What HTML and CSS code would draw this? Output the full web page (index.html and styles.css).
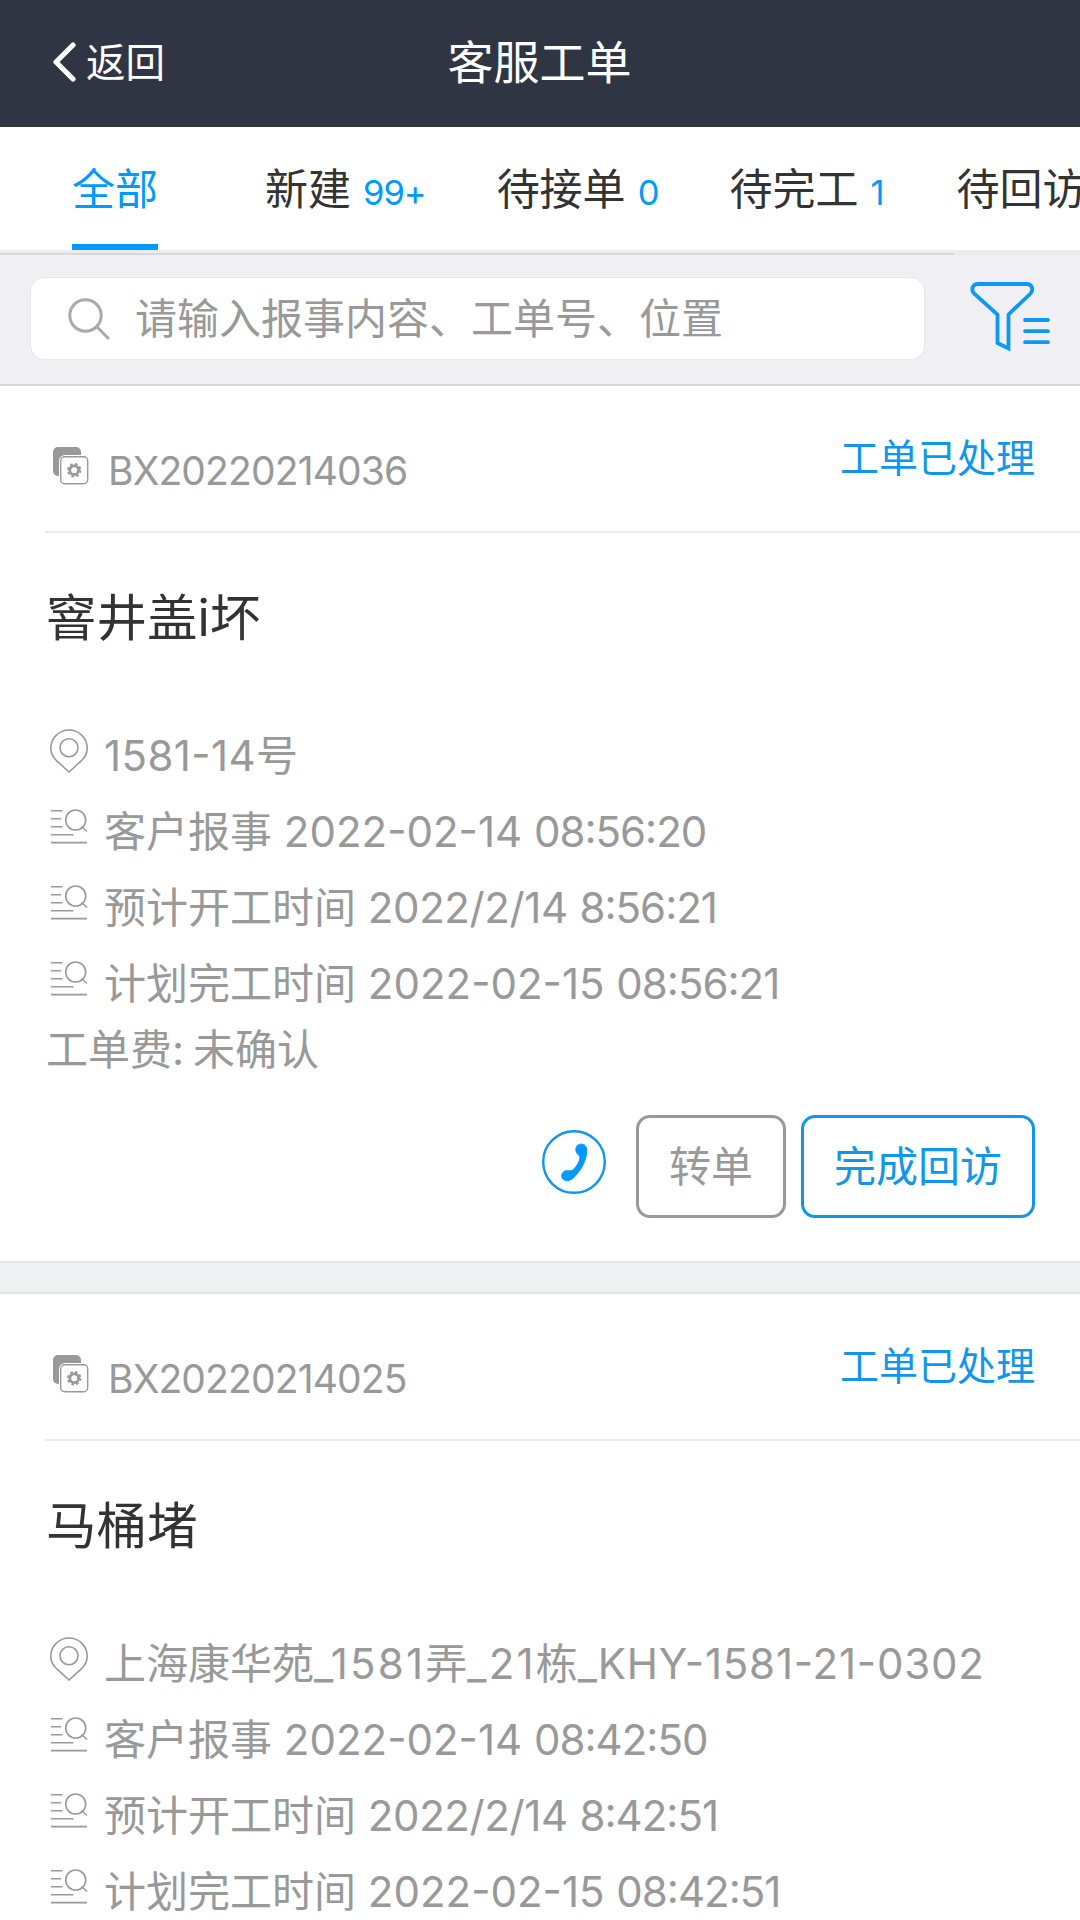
FILE: index.html
```html
<!DOCTYPE html>
<html lang="zh-CN">
  <head>
    <meta charset="UTF-8" />
    <meta name="viewport" content="width=device-width, initial-scale=1.0" />
    <title>客服工单</title>
    <link rel="stylesheet" href="styles.css">
  </head>
  <body>
    <!-- shared icons -->
    <svg class="sprite">
      <symbol id="icon-order" viewBox="0 0 36 38">
        <path d="M5 0h18a5 5 0 0 1 5 5v3H12a6 6 0 0 0-6 6v15H5a5 5 0 0 1-5-5V5a5 5 0 0 1 5-5z" fill="#999" />
        <rect x="7.7" y="9.7" width="27" height="27" rx="4" fill="#fff" stroke="#999" stroke-width="1.4" />
        <circle cx="21.2" cy="23.2" r="4.4" fill="none" stroke="#999" stroke-width="2.8" />
        <circle cx="21.2" cy="23.2" r="6.2" fill="none" stroke="#999" stroke-width="2" stroke-dasharray="2.6 2.27" />
      </symbol>
      <symbol id="icon-pin" viewBox="0 0 38 44">
        <path d="M19 43L6.2 31.3C3 28.2.8 23.8.8 19.2a18.2 18.2 0 0 1 36.4 0c0 4.6-2.2 9-5.4 12.1z" />
        <circle cx="19" cy="18.7" r="9" />
      </symbol>
      <symbol id="icon-record" viewBox="0 0 38 36">
        <path d="M1 1.7h11.5M1 9.7h10M1 17.7h11.5M1 25.7h22.5M1 33.6h36M31.5 17.5l5.5 5" />
        <circle cx="25.7" cy="11" r="10" />
      </symbol>
    </svg>

    <header class="navbar">
      <a class="back">
        <svg class="back-icon" viewBox="0 0 23 40">
          <path d="M20.5 3L3.5 20l17 17" />
        </svg>
        返回
      </a>
      <h1 class="navbar-title">客服工单</h1>
    </header>

    <nav class="tabs">
      <a class="tab active">全部</a>
      <a class="tab">新建<span class="count">99+</span></a>
      <a class="tab">待接单<span class="count">0</span></a>
      <a class="tab">待完工<span class="count">1</span></a>
      <a class="tab">待回访</a>
    </nav>
    <div class="scroll-track"></div>

    <div class="search-bar">
      <div class="search-box">
        <svg class="search-icon" viewBox="0 0 43 43">
          <circle cx="17.5" cy="17.5" r="15.7" />
          <path d="M28.8 28.8L41 41" />
        </svg>
        <span>请输入报事内容、工单号、位置</span>
      </div>
      <svg class="filter-icon" viewBox="0 0 81 70">
        <path d="M8 2h48.500c6 0 7 6 4 9.500L38.500 32.500v34l-11-5.500V32.500L4 11.500C1 8 2 2 8 2z" />
        <path d="M55 38h23M55 49.200h23M55 60.200h23" stroke-linecap="round" />
      </svg>
    </div>

    <main class="orders">
      <section class="order">
        <div class="order-head">
          <svg class="order-icon"><use href="#icon-order" /></svg>
          <span class="order-no">BX20220214036</span>
          <span class="order-status">工单已处理</span>
        </div>
        <h2 class="order-title">窨井盖i坏</h2>
        <ul class="order-info">
          <li class="address">
            <svg class="icon-pin"><use href="#icon-pin" /></svg>
            <span><b>1581-14</b>号</span>
          </li>
          <li>
            <svg class="icon-record"><use href="#icon-record" /></svg>
            <span>客户报事 <b>2022-02-14</b> <i>08:56:20</i></span>
          </li>
          <li>
            <svg class="icon-record"><use href="#icon-record" /></svg>
            <span>预计开工时间 <b class="short">2022/2/14</b> <i>8:56:21</i></span>
          </li>
          <li>
            <svg class="icon-record"><use href="#icon-record" /></svg>
            <span>计划完工时间 <b>2022-02-15</b> <i>08:56:21</i></span>
          </li>
        </ul>
        <p class="order-fee">工单费: 未确认</p>
        <div class="order-actions">
          <svg class="phone-icon" viewBox="0 0 64 64">
            <circle cx="32" cy="32" r="30.800" />
            <path d="M34 18c1-4 6-5 9-2.500 2.500 2.500 2 8 .5 13-2 7-6.500 14-12 19-3.500 3.500-7.500 4-10 2-3-2.500-2-7 1.500-8.500 2.500-1 4.500.5 7-.5 4-3 7.500-8 8-13.500-1-2.500-5-3.500-4-9z" />
          </svg>
          <button class="btn">转单</button>
          <button class="btn btn-primary">完成回访</button>
        </div>
      </section>

      <section class="order">
        <div class="order-head">
          <svg class="order-icon"><use href="#icon-order" /></svg>
          <span class="order-no">BX20220214025</span>
          <span class="order-status">工单已处理</span>
        </div>
        <h2 class="order-title">马桶堵</h2>
        <ul class="order-info">
          <li class="address">
            <svg class="icon-pin"><use href="#icon-pin" /></svg>
            <span>上海康华苑<b class="building">_1581</b>弄<b class="building">_21</b>栋<b>_KHY-1581-21-0302</b></span>
          </li>
          <li>
            <svg class="icon-record"><use href="#icon-record" /></svg>
            <span>客户报事 <b>2022-02-14</b> <i>08:42:50</i></span>
          </li>
          <li>
            <svg class="icon-record"><use href="#icon-record" /></svg>
            <span>预计开工时间 <b class="short">2022/2/14</b> <i>8:42:51</i></span>
          </li>
          <li>
            <svg class="icon-record"><use href="#icon-record" /></svg>
            <span>计划完工时间 <b>2022-02-15</b> <i>08:42:51</i></span>
          </li>
        </ul>
      </section>
    </main>
  </body>
</html>
```

FILE: styles.css
```css
* {
  margin: 0;
  padding: 0;
  box-sizing: border-box;
}

body {
  font-family: Inter, "Noto Sans CJK SC", sans-serif;
  color: #333;
  background: #fff;
  height: 1920px;
  overflow: hidden;
}

svg {
  display: block;
  flex-shrink: 0;
}

.sprite {
  display: none;
}

.navbar {
  display: grid;
  grid-template-columns: 1fr auto 1fr;
  align-items: center;
  height: 127px;
  padding: 0 53px 9px 52px;
  background: #2f3542;
  color: #fff;
}

.back {
  display: flex;
  align-items: center;
  gap: 10px;
  font-size: 39.5px;
}

.back-icon {
  width: 24px;
  height: 40px;
  margin-top: 5px;
  fill: none;
  stroke: #fff;
  stroke-width: 5.2;
  stroke-linecap: round;
  stroke-linejoin: round;
}

.navbar-title {
  font-size: 46px;
  font-weight: 400;
}

.tabs {
  display: flex;
  height: 123px;
  padding-left: 72px;
  overflow: hidden;
  white-space: nowrap;
}

.tab {
  flex-shrink: 0;
  height: 123px;
  line-height: 125px;
  font-size: 43px;
  margin-right: 71px;
}

.tab.active {
  color: #0099ff;
  border-bottom: 6px solid #0099ff;
  margin-right: 107px;
}

.tab:nth-child(4) {
  margin-right: 73px;
}

.count {
  margin-left: 12px;
  font-size: 34.5px;
  letter-spacing: -1px;
  color: #0099ff;
}

.scroll-track {
  height: 5px;
  background: linear-gradient(#d9d9dc, #d9d9dc) 0 3px / 954px 2px no-repeat #ececee;
}

.search-bar {
  display: flex;
  align-items: center;
  height: 131px;
  padding: 0 29px 3px 30px;
  background: #efeff4;
  border-bottom: 2px solid #d7d7da;
}

.search-box {
  display: flex;
  align-items: center;
  width: 895px;
  height: 83px;
  padding-left: 37px;
  background: #fff;
  border: 1px solid #e6e6ea;
  border-radius: 14px;
  font-size: 42px;
  line-height: 81px;
  color: #999;
}

.search-icon {
  width: 43px;
  height: 43px;
  margin: 2px 24px 0 0;
  fill: none;
  stroke: #aaa;
  stroke-width: 3;
}

.filter-icon {
  width: 81px;
  height: 70px;
  margin: 0 0 2px auto;
  fill: none;
  stroke: #0f98f2;
  stroke-width: 3.8;
}

.orders {
  background: #eff0f2;
}

.order {
  height: 877px;
  margin-bottom: 29px;
  background: #fff;
  border-bottom: 2px solid #e5e5e7;
}

.order + .order {
  border-top: 2px solid #e5e5e7;
}

.order-head {
  display: flex;
  height: 147px;
  margin-left: 45px;
  padding: 0 45px 0 8px;
  border-bottom: 2px solid #e9e9e9;
}

.order-icon {
  width: 36px;
  height: 38px;
  margin: 61px 19px 0 0;
}

.order-no {
  line-height: 169px;
  font-size: 39px;
  letter-spacing: -0.85px;
  color: #999;
}

.order-status {
  margin-left: auto;
  line-height: 143px;
  font-size: 39px;
  color: #1296eb;
}

.order-title {
  height: 170px;
  padding-left: 46px;
  line-height: 169px;
  font-size: 50.5px;
  font-weight: 400;
}

.order-info {
  padding: 15px 0 0 50px;
  list-style: none;
  font-size: 42px;
  color: #999;
}

.order-info li {
  display: flex;
  align-items: center;
  height: 76px;
  line-height: 76px;
  white-space: nowrap;
}

.order-info li svg {
  margin: 0 16px 10px 0;
  fill: none;
  stroke: #999;
  stroke-width: 1.6;
}

/* raised hyphens and colons, centred on the digits */
.order-info b,
.order-info i {
  font-weight: 400;
  font-style: normal;
  font-feature-settings: "case";
}

.order-info i {
  letter-spacing: -1px;
}

.order-info .short {
  letter-spacing: -0.4px;
}

.order-info .address b {
  letter-spacing: 0.8px;
}

.order-info .address .building {
  letter-spacing: 2.2px;
}

.order-info .address b:first-child {
  letter-spacing: 0.4px;
}

.order-info .address .building:first-child {
  letter-spacing: 2.2px;
}

.icon-pin {
  width: 38px;
  height: 44px;
}

.icon-record {
  width: 38px;
  height: 36px;
}

.order-fee {
  padding-left: 46px;
  line-height: 56px;
  font-size: 42px;
  word-spacing: -3px;
  color: #999;
}

.order-actions {
  display: flex;
  align-items: center;
  justify-content: flex-end;
  padding: 37px 45px 0 0;
}

.phone-icon {
  width: 64px;
  height: 64px;
  margin: 0 30px 10px 0;
}

.phone-icon circle {
  fill: none;
  stroke: #1296eb;
  stroke-width: 2.4;
}

.phone-icon path {
  fill: #0099ff;
  stroke: #0099ff;
}

.btn {
  height: 103px;
  padding: 0 30px 7px;
  border: 3px solid #999;
  border-radius: 14px;
  background: #fff;
  font-family: inherit;
  font-size: 42px;
  color: #999;
}

.btn-primary {
  margin-left: 15px;
  border-color: #1296eb;
  color: #1296eb;
}
```
